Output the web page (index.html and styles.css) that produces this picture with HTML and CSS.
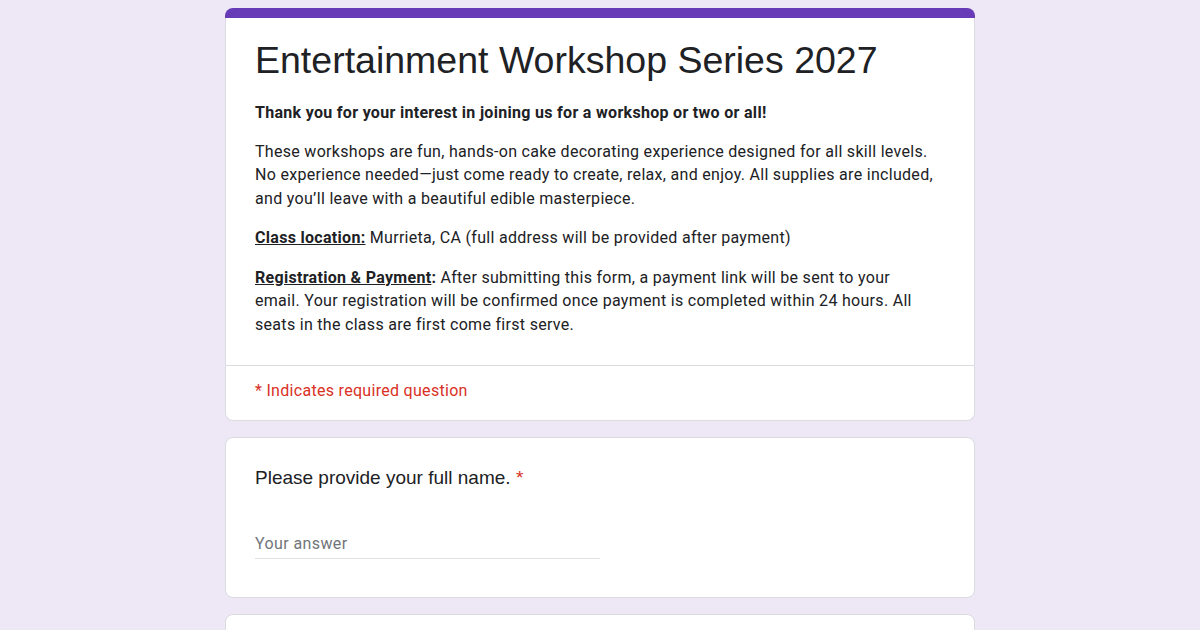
FILE: index.html
```html
<!DOCTYPE html>
<html lang="en">
<head>
  <meta charset="UTF-8" />
  <meta name="viewport" content="width=device-width, initial-scale=1.0">
  <title>Entertainment Workshop Series 2027</title>
  <link rel="stylesheet" href="styles.css">
</head>
<body>
  <div class="form-wrap">
    <div class="card header-card">
      <div class="accent"></div>
      <div class="header-body">
        <div class="intro">
          <h1>Entertainment Workshop Series 2027</h1>
          <p class="lead">Thank you for your interest in joining us for a workshop or two or all!</p>
          <p>These workshops are fun, hands-on cake decorating experience designed for all skill levels. No experience needed—just come ready to create, relax, and enjoy. All supplies are included, and you’ll leave with a beautiful edible masterpiece.</p>
          <p><u class="label">Class location:</u> Murrieta, CA (full address will be provided after payment)</p>
          <p><u class="label">Registration &amp; Payment</u><b>:</b> After submitting this form, a payment link will be sent to your email. Your registration will be confirmed once payment is completed within 24 hours. All seats in the class are first come first serve.</p>
        </div>
        <div class="required-note">* Indicates required question</div>
      </div>
    </div>

    <div class="card question">
      <div class="q-title">Please provide your full name. <span class="star">*</span></div>
      <input type="text" class="answer" placeholder="Your answer" />
    </div>

    <div class="card question"></div>
  </div>
</body>
</html>
```

FILE: styles.css
```css
body {
  margin: 0;
  background-color: #ede7f6;
  font-family: Roboto, "Liberation Sans", Arial, sans-serif;
  color: #202124;
}
.form-wrap {
  width: 750px;
  margin: 8px auto 0;
  display: flex;
  flex-direction: column;
  gap: 16px;
}
.card {
  background-color: #fff;
  border: 1px solid #dadce0;
  border-radius: 8px;
}
.header-card {
  border: none;
  background: none;
}
.accent {
  height: 10px;
  background-color: #673ab7;
  border-radius: 8px 8px 0 0;
}
.header-body {
  background-color: #fff;
  border: 1px solid #dadce0;
  border-top: none;
  border-radius: 0 0 8px 8px;
}
.intro {
  padding: 18px 37px 29px 29px;
  border-bottom: 1px solid #dadce0;
}
h1 {
  font-family: "Liberation Sans", Arial, sans-serif;
  font-size: 37.5px;
  font-weight: 400;
  line-height: 48px;
  margin: 0 0 17px;
}
.intro p {
  font-size: 16px;
  line-height: 23.5px;
  margin: 0 0 16px;
  letter-spacing: 0.3px;
}
.intro p:last-child {
  margin-bottom: 0;
}
.intro .lead {
  font-weight: 700;
  margin-bottom: 15px;
}
.label {
  font-weight: 700;
}
.required-note {
  color: #d93025;
  font-size: 16px;
  letter-spacing: 0.3px;
  padding: 15px 29px 20px;
}
.question {
  padding: 28px 29px 38px;
}
.q-title {
  font-family: "Liberation Sans", Arial, sans-serif;
  font-size: 19px;
  line-height: 24px;
}
.star {
  color: #d93025;
}
.answer {
  display: block;
  width: 345px;
  margin-top: 40px;
  padding: 4px 0 5px;
  border: none;
  border-bottom: 1px solid #e0e0e0;
  font-family: Roboto, sans-serif;
  font-size: 16px;
  letter-spacing: 0.4px;
  outline: none;
}
.answer::placeholder {
  color: #70757a;
}
.question:last-child {
  height: 60px;
  padding: 0;
}
```
